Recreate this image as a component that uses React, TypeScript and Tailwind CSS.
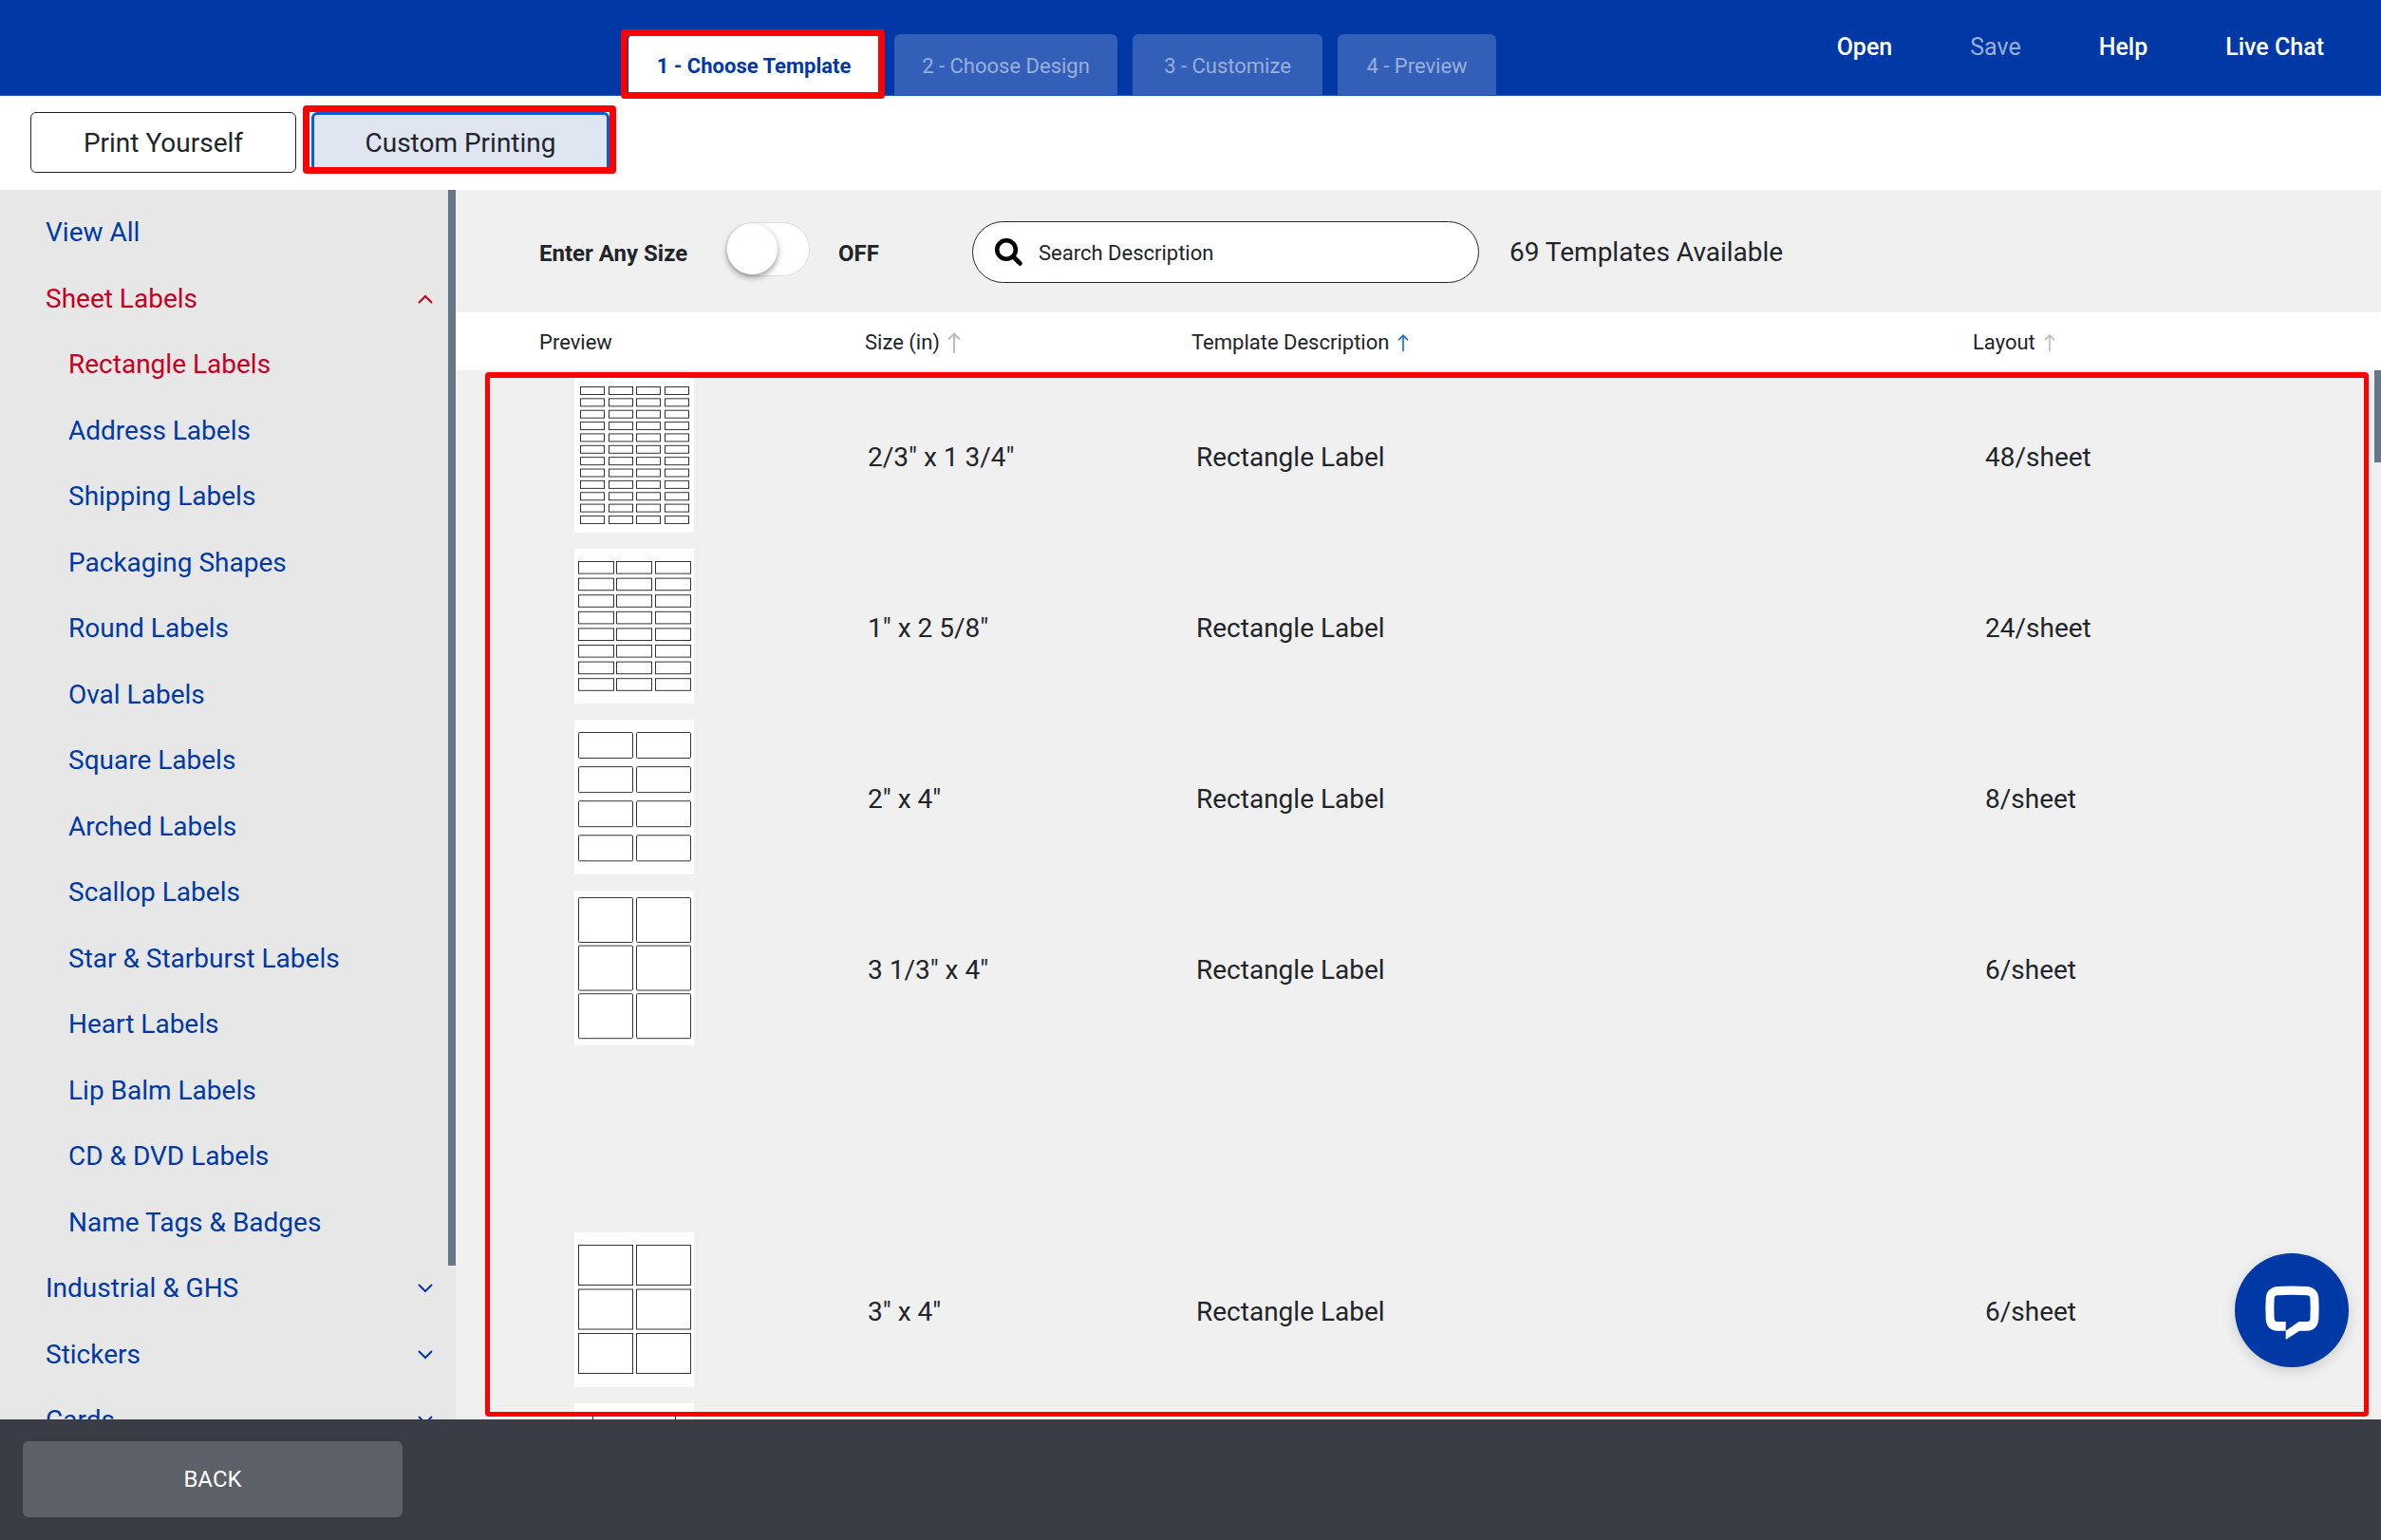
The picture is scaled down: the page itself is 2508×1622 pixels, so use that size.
import { useState } from "react";

type Grid = { xs: number[]; w: number; y: number; pitch: number; h: number; rows: number; r: number };
type Template = { size: string; layout: string; grid: Grid };

const TWO_UP = [4, 65];

const TEMPLATES: (Template | null)[] = [
  { size: '2/3" x 1 3/4"', layout: "48/sheet", grid: { xs: [6, 36, 65, 95], w: 26, y: 9, pitch: 12.36, h: 9, rows: 12, r: 0 } },
  { size: '1" x 2 5/8"', layout: "24/sheet", grid: { xs: [4, 44, 85], w: 38, y: 13, pitch: 17.6, h: 13.6, rows: 8, r: 0 } },
  { size: '2" x 4"', layout: "8/sheet", grid: { xs: TWO_UP, w: 58, y: 13, pitch: 36.1, h: 28, rows: 4, r: 1 } },
  { size: '3 1/3" x 4"', layout: "6/sheet", grid: { xs: TWO_UP, w: 58, y: 7, pitch: 50.6, h: 48, rows: 3, r: 1 } },
  null,
  { size: '3" x 4"', layout: "6/sheet", grid: { xs: TWO_UP, w: 58, y: 13, pitch: 46.5, h: 43, rows: 3, r: 0 } },
  { size: "", layout: "", grid: { xs: [19], w: 88, y: 10, pitch: 72, h: 70, rows: 2, r: 0 } },
];

type NavItem = { label: string; level: 1 | 2; active?: boolean; chevron?: "up" | "down" };

const NAV: NavItem[] = [
  { label: "View All", level: 1 },
  { label: "Sheet Labels", level: 1, active: true, chevron: "up" },
  { label: "Rectangle Labels", level: 2, active: true },
  { label: "Address Labels", level: 2 },
  { label: "Shipping Labels", level: 2 },
  { label: "Packaging Shapes", level: 2 },
  { label: "Round Labels", level: 2 },
  { label: "Oval Labels", level: 2 },
  { label: "Square Labels", level: 2 },
  { label: "Arched Labels", level: 2 },
  { label: "Scallop Labels", level: 2 },
  { label: "Star & Starburst Labels", level: 2 },
  { label: "Heart Labels", level: 2 },
  { label: "Lip Balm Labels", level: 2 },
  { label: "CD & DVD Labels", level: 2 },
  { label: "Name Tags & Badges", level: 2 },
  { label: "Industrial & GHS", level: 1, chevron: "down" },
  { label: "Stickers", level: 1, chevron: "down" },
  { label: "Cards", level: 1, chevron: "down" },
];

const STEPS = [
  { label: "2 - Choose Design", width: "w-[235px]" },
  { label: "3 - Customize", width: "w-[200px]" },
  { label: "4 - Preview", width: "w-[167px]" },
];

function SheetPreview({ grid }: { grid: Grid }) {
  const cells = Array.from({ length: grid.rows }, (_, row) => grid.xs.map((x) => ({ x, y: grid.y + row * grid.pitch }))).flat();
  return (
    <svg className="block bg-white" width="126" height="163" viewBox="0 0 126 163" fill="none" stroke="#333" aria-hidden="true">
      {cells.map(({ x, y }, i) => (
        <rect key={i} x={x + 0.5} y={y + 0.5} width={grid.w - 1} height={grid.h - 1} rx={grid.r} />
      ))}
    </svg>
  );
}

function Chevron({ direction }: { direction: "up" | "down" }) {
  return (
    <svg width="16" height="10" viewBox="0 0 16 10" fill="none" stroke="currentColor" strokeWidth="2" aria-hidden="true">
      <path d={direction === "up" ? "M1 9L8 2L15 9" : "M1 1L8 8L15 1"} />
    </svg>
  );
}

function SortArrow({ className, size }: { className: string; size: number }) {
  return (
    <svg className={className} width={size} height={size} viewBox="0 0 22 22" fill="none" stroke="currentColor" strokeWidth="2" aria-hidden="true">
      <path d="M11 22V1.500M5 7.500L11 1.500L17 7.500" />
    </svg>
  );
}

function Header() {
  return (
    <header className="relative flex h-[101px] shrink-0 justify-end border-b border-[#1f52b0] bg-[#0039a6]">
      <nav className="absolute bottom-0 left-[662px] flex h-16 gap-4 text-[22px]" aria-label="Steps">
        <div className="relative flex">
          <button className="w-[264px] rounded-t-md bg-white pt-0.5 font-bold text-[#0039a6]">1 - Choose Template</button>
          <div className="pointer-events-none absolute -top-[5px] -right-[6px] -bottom-[4px] -left-[8px] z-10 rounded-sm border-[7px] border-[#ff0000]" />
        </div>
        {STEPS.map((step) => (
          <button key={step.label} className={"rounded-t-md bg-[#335fb8] pt-0.5 text-[#99afdc] " + step.width}>
            {step.label}
          </button>
        ))}
      </nav>
      <nav className="flex h-[100px] items-center gap-[82px] pr-[60px] text-[25px] font-medium text-white" aria-label="Actions">
        <button>Open</button>
        <button className="font-normal text-[#99afdc]">Save</button>
        <button>Help</button>
        <button>Live Chat</button>
      </nav>
    </header>
  );
}

function Sidebar() {
  return (
    <aside className="flex w-[480px] shrink-0 overflow-hidden bg-[#e7e7e7]">
      <ul className="flex-1 pt-[10px] text-[28px]">
        {NAV.map((item) => (
          <li key={item.label} className="odd:h-[70px] even:h-[69px]">
            <a
              href="#"
              className={
                "flex h-full items-center justify-between pr-4 " +
                (item.level === 1 ? "pl-12 " : "pl-[72px] ") +
                (item.active ? "text-[#c8001e]" : "text-[#0039a6]")
              }
            >
              {item.label}
              {item.chevron && <Chevron direction={item.chevron} />}
            </a>
          </li>
        ))}
      </ul>
      <div className="h-[1133px] w-2 bg-[#667588]" />
    </aside>
  );
}

function Toolbar() {
  const [anySize, setAnySize] = useState(false);
  return (
    <div className="flex h-[129px] shrink-0 items-center pt-0.5 pl-[88px]">
      <label htmlFor="any-size" className="w-[196px] pt-[3px] text-[24px] font-bold">
        Enter Any Size
      </label>
      <span className="relative mb-[6px] flex h-[57px] w-[89px] items-center rounded-full border border-[#dfdfdf] bg-white pl-px">
        <input
          id="any-size"
          type="checkbox"
          role="switch"
          checked={anySize}
          onChange={(e) => setAnySize(e.target.checked)}
          className="peer absolute inset-0 h-full w-full cursor-pointer appearance-none"
        />
        <span className="pointer-events-none size-[53px] rounded-full bg-white shadow-[0_3px_6px_rgba(0,0,0,0.4)] peer-checked:translate-x-8" />
      </span>
      <span className="ml-[30px] w-[141px] pt-[3px] text-[24px] font-bold">{anySize ? "ON" : "OFF"}</span>
      <div className="relative h-[65px] w-[534px]">
        <svg className="absolute top-[18px] left-6" width="30" height="30" viewBox="0 0 30 30" fill="none" stroke="#000" aria-hidden="true">
          <circle cx="12" cy="12" r="9.8" strokeWidth="4.600" />
          <path d="M19.5 19.5L26.500 26.500" strokeWidth="4.600" strokeLinecap="round" />
        </svg>
        <input
          type="text"
          aria-label="Search Description"
          placeholder="Search Description"
          className="h-full w-full rounded-full border border-[#212529] bg-white pt-0.5 pr-6 pl-[69px] text-[22px] placeholder:text-[#212529]"
        />
      </div>
      <p className="ml-8 text-[28px]">69 Templates Available</p>
    </div>
  );
}

function TemplateTable() {
  return (
    <div className="relative min-h-0 flex-1 overflow-hidden">
      <table className="w-full table-fixed border-collapse text-left">
        <thead className="bg-white">
          <tr className="h-[61px] text-[22px]">
            <th className="w-[431px] pt-0.5 pl-[88px] font-normal">Preview</th>
            <th className="w-[344px] pt-0.5 font-normal">
              <span className="flex items-center gap-1">
                Size (in)
                <SortArrow className="text-[#bbbbbb]" size={22} />
              </span>
            </th>
            <th className="pt-0.5 font-normal">
              <span className="flex items-center gap-[6px]">
                Template Description
                <SortArrow className="text-[#1a66e0]" size={18} />
              </span>
            </th>
            <th className="w-[430px] pt-0.5 font-normal">
              <span className="flex items-center gap-[6px]">
                Layout
                <SortArrow className="text-[#bbbbbb]" size={18} />
              </span>
            </th>
          </tr>
        </thead>
        <tbody className="text-[28px]">
          {TEMPLATES.map((t, i) => (
            <tr key={i} className="h-[180px]">
              <td className="pb-0.5 pl-[125px]">{t && <SheetPreview grid={t.grid} />}</td>
              <td className="pt-[3px] pl-[3px]">{t?.size}</td>
              <td className="pt-[3px] pl-[5px]">{t?.size ? "Rectangle Label" : null}</td>
              <td className="pt-[3px] pl-[13px]">{t?.layout}</td>
            </tr>
          ))}
        </tbody>
      </table>
      <div className="absolute top-[61px] right-0 h-[97px] w-[7px] bg-[#667588]" />
      <div className="pointer-events-none absolute top-[63px] right-[13px] bottom-[3px] left-[31px] rounded-sm border-[5px] border-t-[6px] border-[#ff0000]" />
      <button aria-label="Open chat" className="absolute right-[34px] bottom-[55px] size-[120px] rounded-full bg-[#0039a6] shadow-[0_4px_14px_rgba(0,0,0,0.15)]">
        <svg width="120" height="120" viewBox="0 0 120 120" aria-hidden="true">
          <path
            fill="#fff"
            fillRule="evenodd"
            d="M44.5 35Q60.5 34.2 76.5 35C83.5 36 87.8 40 88.3 47Q89 58 88.3 69C87.8 77 83.5 81.7 76 81.7H68L53.7 91V81.7H45C37.500 81.700 33.200 77 32.700 69.500Q32 58 32.700 47.500C33.200 40 37.500 36 44.500 35ZM45 44.300C42.500 44.500 41.800 45.500 41.600 47.500Q41 58 41.600 68.500C41.800 71 42.800 72 45 72H53.700V81.700L67.500 72H76C78.300 72 79.200 71 79.400 68.500Q80 58 79.400 47.500C79.200 45.500 78.500 44.500 76 44.300Q60.500 43.200 45 44.300Z"
          />
        </svg>
      </button>
    </div>
  );
}

export default function App() {
  return (
    <div className="flex h-screen flex-col overflow-hidden bg-white font-['Roboto',sans-serif] text-[#212529]">
      <Header />
      <div className="flex h-[99px] shrink-0 items-start gap-4 pt-[17px] pl-8 text-[28px]">
        <button className="h-16 w-[280px] rounded-md border border-[#212529] bg-white pt-0.5">Print Yourself</button>
        <div className="relative">
          <button className="h-16 w-[314px] rounded-md border-[3px] border-[#0f5bd6] bg-[#dfe5f1] pt-0.5">Custom Printing</button>
          <div className="pointer-events-none absolute -top-[7px] -right-[7px] -bottom-px -left-[9px] rounded-sm border-[7px] border-[#ff0000]" />
        </div>
      </div>
      <div className="flex min-h-0 flex-1">
        <Sidebar />
        <main className="flex min-w-0 flex-1 flex-col bg-[#f0f0f0]">
          <Toolbar />
          <TemplateTable />
        </main>
      </div>
      <footer className="relative h-[127px] shrink-0 bg-[#3a3d45] px-6 pt-[23px]">
        <button className="h-20 w-[400px] rounded-md bg-[#5c6068] text-2xl text-white">BACK</button>
      </footer>
    </div>
  );
}
